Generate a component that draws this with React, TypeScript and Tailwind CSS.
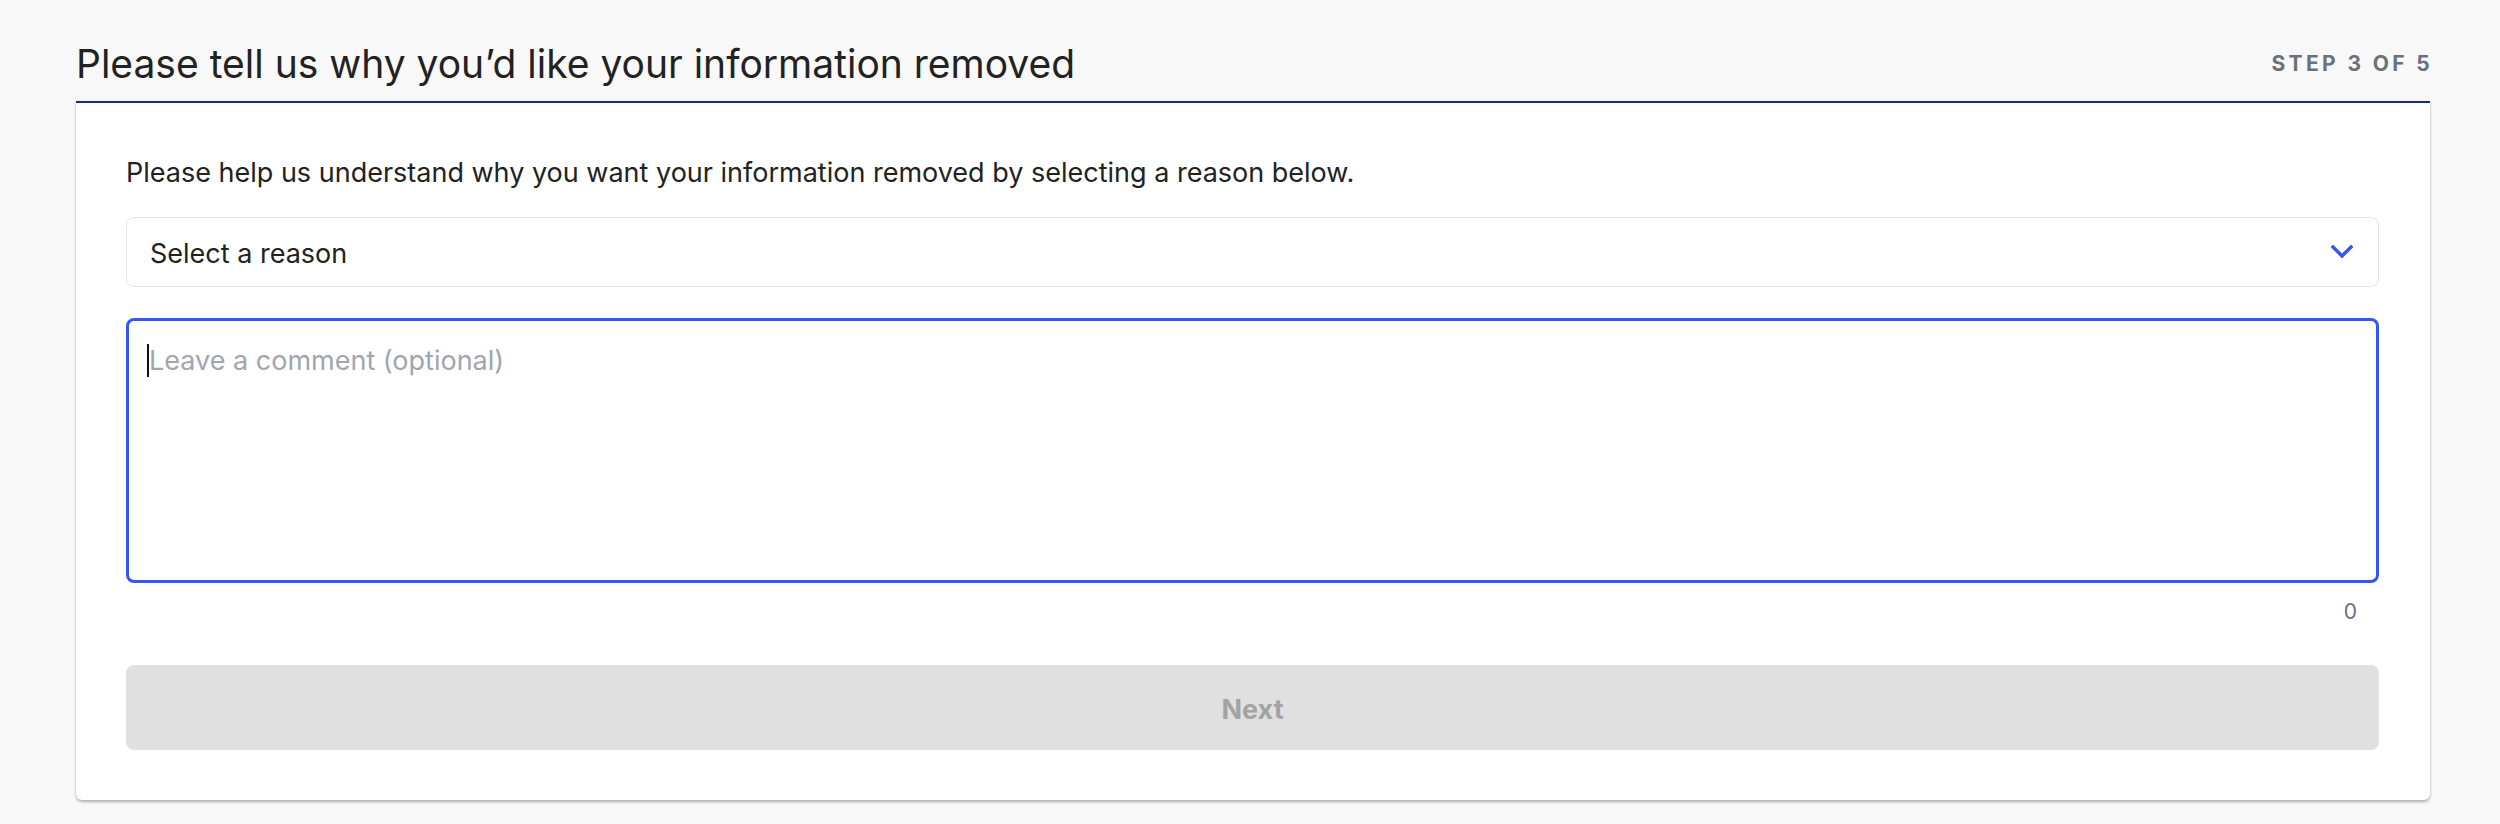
import React from "react";

const font = { fontFamily: "Inter, 'Noto Sans', sans-serif" };

function ChevronDown() {
  return (
    <svg width="22" height="14" viewBox="0 0 22 14" fill="none" className="shrink-0">
      <polyline points="2,2 11,11 20,2" stroke="#3755f3" strokeWidth="3.4" strokeLinecap="square" />
    </svg>
  );
}

export default function App() {
  return (
    <div className="min-h-screen bg-[#f8f8f8] pl-[76px] pr-[70px]" style={font}>
      {/* Header */}
      <div className="flex items-center justify-between pt-[40px] pb-[14px]">
        <h1 className="text-[39px] leading-[47px] font-normal text-[#222] tracking-normal">
          Please tell us why you’d like your information removed
        </h1>
        <span className="text-[21px] font-bold tracking-[0.16em] text-[#6b707b] uppercase -mr-[3px]">
          Step 3 of 5
        </span>
      </div>

      {/* Card */}
      <div className="bg-white border-t-2 border-[#1b2a7d] rounded-b-md shadow-[0_2px_3px_rgba(0,0,0,0.28),0_0_2px_rgba(0,0,0,0.08)] pt-[54px] pb-[50px] pl-[50px] pr-[51px]">
        <p className="text-[27px] leading-[32px] text-[#222]">
          Please help us understand why you want your information removed by selecting a reason below.
        </p>

        <button className="mt-[28px] w-full h-[70px] flex items-center justify-between border border-[#e4e4e4] rounded-lg pl-[23px] pr-[25px] bg-white text-left">
          <span className="text-[27px] leading-[34px] text-[#222] pt-[4px]">Select a reason</span>
          <ChevronDown />
        </button>

        <div className="relative mt-[31px]">
          <textarea
            placeholder="Leave a comment (optional)"
            className="block w-full h-[265px] resize-none border-[3px] border-[#3555f5] rounded-lg pl-[20px] pr-[19px] pt-[22px] text-[27px] leading-[36px] text-[#222] placeholder:text-[#a0a5b0] outline-none"
          />
          <span className="absolute left-[21px] top-[26px] w-[2px] h-[33px] bg-[#111] pointer-events-none" />
        </div>

        <div className="mt-[16px] text-right pr-[22px] text-[21px] leading-[25px] text-[#6b707b]">0</div>

        <button
          disabled
          className="mt-[41px] w-full h-[85px] rounded-lg bg-[#e0e0e0] text-[#a3a3a3] font-bold text-[27px] pt-[5px]"
        >
          Next
        </button>
      </div>
    </div>
  );
}
